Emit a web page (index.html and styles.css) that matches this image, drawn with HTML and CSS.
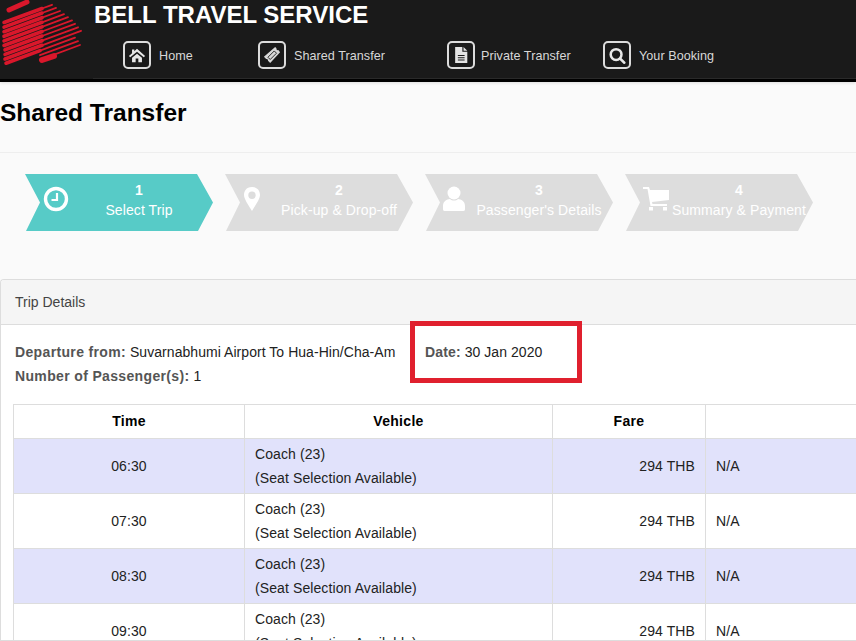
FILE: index.html

```html
<!DOCTYPE html>
<html>
<head>
    <meta charset="utf-8" />
    <title>Bell Travel Service - Shared Transfer</title>
    <link rel="stylesheet" href="styles.css">
</head>
<body>
<!-- Top Bar -->
<div class="top-bar">
    <svg class="logo" viewBox="0 0 82 68" aria-hidden="true">
        <g fill="none" stroke="#d9172b" stroke-linecap="round">
            <path stroke-width="5" d="M9 10 L27 2"/>
            <path stroke-width="1.800" d="M42 8.500 L52 4.800 M42 13 L56 7.900 M42 17.700 L60 11 M42 22.300 L64 14.100 M42 26.900 L68 17.200 M42 31.500 L72 20.400 M42 36 L75 23.800 M42 40.700 L78 27.300 M42 45.300 L81 30.800 M40 50.600 L75 37.600 M40 55.200 L78 41.100 M40 59.800 L80 45"/>
            <path stroke-width="3.600" d="M4 22.500 L42 8.500 M4 27.100 L42 13 M4 31.700 L42 17.700 M4 36.300 L42 22.300 M4 40.900 L42 26.900 M4 45.500 L42 31.500 M5 49.800 L42 36 M5 54.400 L42 40.700 M5 59 L42 45.300 M6 63.200 L40 50.600"/>
            <path stroke-width="6" d="M42 60 L54 56"/>
        </g>
    </svg>
    <div class="brand">
        <div class="brand-name">BELL TRAVEL SERVICE</div>
        <div class="menu">
            <a class="menu-item item-home">
                <span class="menu-icon">
                    <svg viewBox="0 0 20 20"><path d="M10 3 L19 11 L17.500 12.500 L10 6.500 L2.500 12.500 L1 11 L4.500 8 L4.500 4 L7 4 L7 5.800 Z M4.500 13 L10 8.500 L15.500 13 L15.500 18 L11.500 18 L11.500 14 L8.500 14 L8.500 18 L4.500 18 Z" fill="#e8e8e8"/></svg>
                </span>
                Home
            </a>
            <a class="menu-item item-shared">
                <span class="menu-icon">
                    <svg viewBox="0 0 20 20"><path d="M13.500 1 L15 2.500 C14.500 3.500 15.500 5 17 4.500 L19 7 L8 19 L5.500 16.500 C6 15 4.500 14 3.500 14.500 L1 12 Z" fill="#d8d8d8"/><path d="M12.500 5.500 L5.500 12.500 L8 15 L15 8 Z" fill="none" stroke="#1a1a1a" stroke-width="1"/></svg>
                </span>
                Shared Transfer
            </a>
            <a class="menu-item item-private">
                <span class="menu-icon">
                    <svg viewBox="0 0 20 20"><path d="M3.500 1 L11.500 1 L11.500 6.500 L17 6.500 L17 19 L3.500 19 Z M12.800 1 L17 5.200 L12.800 5.200 Z" fill="#e4e4e4"/><path d="M6.500 10.500 L14 10.500 M6.500 13 L14 13 M6.500 15.500 L14 15.500" stroke="#1a1a1a" stroke-width="1.200"/></svg>
                </span>
                Private Transfer
            </a>
            <a class="menu-item item-booking">
                <span class="menu-icon">
                    <svg viewBox="0 0 20 20"><circle cx="9" cy="9.500" r="6" fill="none" stroke="#e8e8e8" stroke-width="2.800"/><path d="M13.500 14 L18 18.500" stroke="#e8e8e8" stroke-width="3" stroke-linecap="round"/></svg>
                </span>
                Your Booking
            </a>
        </div>
    </div>
</div>

<div class="page-head">
    <h1>Shared Transfer</h1>
</div>

<!-- Steps -->
<div class="steps">
    <div class="step active">
        <svg class="step-icon" viewBox="0 0 26 26"><circle cx="13" cy="13" r="10.500" fill="none" stroke="#fff" stroke-width="3.400"/><path d="M14 7 L14 14 L8.500 14" fill="none" stroke="#fff" stroke-width="2.200"/></svg>
        <div class="step-text"><b>1</b><span>Select Trip</span></div>
    </div>
    <div class="step">
        <svg class="step-icon icon-pin" viewBox="0 0 26 26"><path fill-rule="evenodd" d="M13 1 C19 1 21 5.500 21 9 C21 13 16 20 13 25 C10 20 5 13 5 9 C5 5.500 7 1 13 1 Z M13 5.500 A3.700 3.700 0 1 0 13 12.900 A3.700 3.700 0 1 0 13 5.500 Z" fill="#fff"/></svg>
        <div class="step-text"><b>2</b><span>Pick-up &amp; Drop-off</span></div>
    </div>
    <div class="step">
        <svg class="step-icon icon-user" viewBox="0 0 26 26"><circle cx="13" cy="7" r="6.500" fill="#fff"/><path d="M2 23 C2 25 3 25 5 25 L21 25 C23 25 24 25 24 23 L24 20 C24 15 20 13.500 17 13 C15 15 11 15 9 13 C6 13.500 2 15 2 20 Z" fill="#fff"/></svg>
        <div class="step-text"><b>3</b><span>Passenger's Details</span></div>
    </div>
    <div class="step">
        <svg class="step-icon" viewBox="0 0 26 26"><path d="M0 1 L6 1 L7 4 L26 4 L26 14 L9 16 L9.500 18 L24 18 L24 20 L7.500 20 L4.500 3 L0 3 Z" fill="#fff"/><rect x="6" y="21" width="4" height="3.500" fill="#fff"/><rect x="20" y="21" width="4" height="3.500" fill="#fff"/></svg>
        <div class="step-text"><b>4</b><span>Summary &amp; Payment</span></div>
    </div>
</div>

<!-- Trip panel -->
<div class="panel">
    <div class="panel-heading">Trip Details</div>
    <div class="panel-body">
        <div class="trip-info">
            <div class="info-row">
                <span class="info-departure"><b>Departure from:</b> Suvarnabhumi Airport To Hua-Hin/Cha-Am</span>
                <span class="info-date"><b>Date:</b> 30 Jan 2020</span>
            </div>
            <div class="info-row"><span><b>Number of Passenger(s):</b> 1</span></div>
            <div class="highlight"></div>
        </div>
        <table class="trip-table">
            <tr>
                <th class="col-time">Time</th>
                <th class="col-vehicle">Vehicle</th>
                <th class="col-fare">Fare</th>
                <th></th>
            </tr>
            <tr class="odd">
                <td class="center">06:30</td>
                <td>Coach (23)<br>(Seat Selection Available)</td>
                <td class="right">294 THB</td>
                <td>N/A</td>
            </tr>
            <tr>
                <td class="center">07:30</td>
                <td>Coach (23)<br>(Seat Selection Available)</td>
                <td class="right">294 THB</td>
                <td>N/A</td>
            </tr>
            <tr class="odd">
                <td class="center">08:30</td>
                <td>Coach (23)<br>(Seat Selection Available)</td>
                <td class="right">294 THB</td>
                <td>N/A</td>
            </tr>
            <tr>
                <td class="center">09:30</td>
                <td>Coach (23)<br>(Seat Selection Available)</td>
                <td class="right">294 THB</td>
                <td>N/A</td>
            </tr>
        </table>
    </div>
</div>
</body>
</html>
```

FILE: styles.css

```css
* {
  box-sizing: border-box;
}
html, body {
  height: 641px;
  overflow: hidden;
}
body {
  margin: 0;
  padding: 0;
  font-family: "Liberation Sans", Arial, sans-serif;
  font-size: 14px;
  color: #333;
  background-color: #fafafa;
}

/* ============ Top bar ============ */
.top-bar {
  height: 82px;
  display: flex;
  background-color: #1a1a1a;
  border-bottom: 3px solid #000;
  box-shadow: 0 1px 3px rgba(0, 0, 0, .12);
  overflow: hidden;
}
.logo {
  width: 82px;
  height: 68px;
  flex: none;
}
.brand {
  margin-left: 11px;
  padding-left: 1px;
  flex: 1;
  border-bottom: 1px solid #2a2a2a;
}
.brand-name {
  color: #fff;
  font-size: 24px;
  font-weight: bold;
  line-height: 28px;
  margin-top: 1px;
  white-space: nowrap;
}
.menu {
  display: flex;
  margin-top: 14px;
  margin-left: 29px;
}
.menu-item {
  display: flex;
  align-items: center;
  color: #d8d8d8;
  font-size: 12.600px;
  letter-spacing: .05px;
  white-space: nowrap;
}
.item-home { width: 135px; }
.item-shared { width: 189px; }
.item-private { width: 156px; }
.menu-icon {
  width: 28px;
  height: 28px;
  border: 2px solid #dcdcdc;
  border-radius: 5px;
  margin: -2px 8px 0 0;
  display: flex;
  align-items: center;
  justify-content: center;
}
.item-private .menu-icon {
  margin-right: 6px;
}
.menu-icon svg {
  width: 18px;
  height: 18px;
}

/* ============ Page heading ============ */
.page-head {
  height: 71px;
  border-bottom: 1px solid #eee;
  padding-top: 16px;
}
h1 {
  margin: 0;
  color: #000;
  font-size: 24.500px;
  line-height: 29px;
  font-weight: bold;
}

/* ============ Steps ============ */
.steps {
  height: 126px;
  display: flex;
  gap: 12px;
  padding: 21px 0 0 25px;
}
.step {
  width: 188px;
  height: 57px;
  display: flex;
  background-color: #ddd;
  color: #fff;
  clip-path: polygon(0 0, 172px 0, 100% 50%, 173px 100%, 1px 100%, 15px 50%);
}
.step.active {
  background-color: #57cbc7;
}
.step-icon {
  width: 26px;
  height: 26px;
  flex: none;
  margin: 12px 0 0 18px;
}
.step-icon.icon-pin {
  margin: 12px 4px 0 14px;
}
.step-icon.icon-user {
  margin: 12px 2px 0 16px;
}
.step-text {
  flex: 1;
  text-align: center;
  padding: 6px 4px 0 0;
  font-size: 14px;
  line-height: 20px;
  letter-spacing: .1px;
  white-space: nowrap;
}
.step-text b, .step-text span {
  display: block;
}

/* ============ Panel ============ */
.panel {
  border: 1px solid #ddd;
  border-right: none;
  border-radius: 4px 0 0 0;
  background-color: #fff;
  height: 362px;
  overflow: hidden;
}
.panel-heading {
  height: 45px;
  background-color: #f5f5f5;
  border-bottom: 1px solid #ddd;
  padding: 14px 14px 0;
  line-height: 17px;
  color: #444;
}
.panel-body {
  padding: 0 0 0 12px;
}
.trip-info {
  position: relative;
  height: 79px;
  padding: 15px 0 0 2px;
  color: #222;
  letter-spacing: .05px;
}
.trip-info b {
  color: #555;
  letter-spacing: .35px;
}
.trip-info .info-date b {
  letter-spacing: .15px;
}
.info-row {
  display: flex;
  height: 24px;
  line-height: 24px;
}
.info-departure {
  width: 410px;
}
/* red annotation drawn over the screenshot */
.highlight {
  position: absolute;
  left: 397px;
  top: -4px;
  width: 172px;
  height: 62px;
  border: 5px solid #e0202e;
}
.trip-table {
  width: 850px;
  border-collapse: collapse;
  table-layout: fixed;
}
.trip-table th, .trip-table td {
  border: 1px solid #ddd;
  padding: 3px 10px;
  line-height: 24px;
  height: 55px;
  color: #222;
  letter-spacing: .1px;
}
.trip-table th {
  height: 34px;
  padding: 2px 10px 4px;
  color: #000;
  text-align: center;
  letter-spacing: .3px;
}
.col-time { width: 231px; }
.col-vehicle { width: 308px; }
.col-fare { width: 153px; }
.trip-table .odd td {
  background-color: #e1e2fb;
}
.center {
  text-align: center;
}
.right {
  text-align: right;
}
```
